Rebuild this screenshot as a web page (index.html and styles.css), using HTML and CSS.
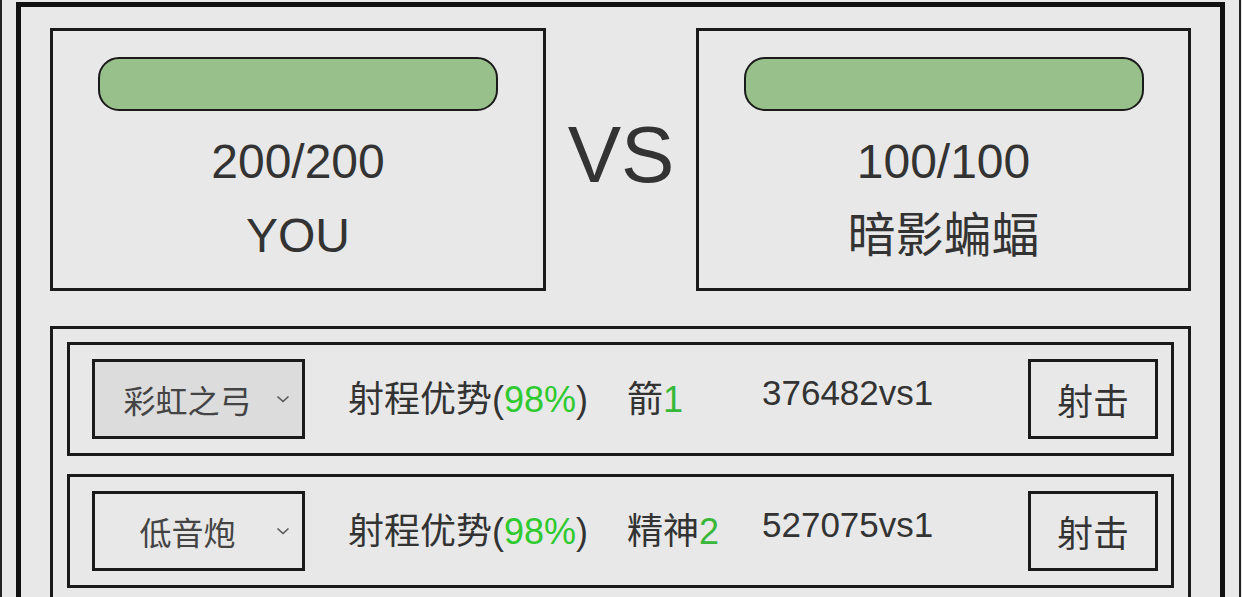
FILE: index.html
```html
<!DOCTYPE html>
<html lang="zh-CN">
<head>
    <meta charset="UTF-8">
    <meta name="viewport" content="width=device-width, initial-scale=1.0">
    <title>对战</title>
    <link rel="stylesheet" href="styles.css">
</head>
<body>

    <div class="frame">
        <div class="arena">

            <!-- Fighters -->
            <section class="fighters">
                <div class="card">
                    <div class="hp-bar"></div>
                    <div class="hp">200/200</div>
                    <div class="name">YOU</div>
                </div>
                <div class="vs">VS</div>
                <div class="card">
                    <div class="hp-bar"></div>
                    <div class="hp">100/100</div>
                    <div class="name">暗影蝙蝠</div>
                </div>
            </section>

            <!-- Weapons -->
            <section class="weapons">
                <div class="row">
                    <div class="select active">
                        <span class="select-text">彩虹之弓</span>
                        <svg class="chevron" width="14" height="8" viewBox="0 0 14 8"><path d="M1.5 1.5 L7 6.5 L12.5 1.5" fill="none" stroke="#555" stroke-width="1.6"/></svg>
                    </div>
                    <div class="stat">射程优势(<span class="good">98%</span>)</div>
                    <div class="ammo">箭<span class="count">1</span></div>
                    <div class="odds">376482vs1</div>
                    <button class="shoot">射击</button>
                </div>
                <div class="row">
                    <div class="select">
                        <span class="select-text">低音炮</span>
                        <svg class="chevron" width="14" height="8" viewBox="0 0 14 8"><path d="M1.5 1.5 L7 6.5 L12.5 1.5" fill="none" stroke="#555" stroke-width="1.6"/></svg>
                    </div>
                    <div class="stat">射程优势(<span class="good">98%</span>)</div>
                    <div class="ammo">精神<span class="count">2</span></div>
                    <div class="odds">527075vs1</div>
                    <button class="shoot">射击</button>
                </div>
            </section>

        </div>
    </div>

</body>
</html>
```

FILE: styles.css
```css
* {
    box-sizing: border-box;
}
body {
    margin: 0;
    background-color: #e8e8e8;
    color: #333;
    font-family: "Liberation Sans", "Noto Sans CJK SC", sans-serif;
    overflow: hidden;
}
.frame {
    width: 1241px;
    height: 700px;
    border: 2px solid #222;
    border-top: none;
    padding: 2px 14px 0;
}
.arena {
    border: 5px solid #111;
    padding: 21px 29px 0;
    height: 700px;
}
.fighters {
    display: grid;
    grid-template-columns: 496px 1fr 495px;
}
.card {
    height: 263px;
    border: 3px solid #1a1a1a;
    text-align: center;
    padding-top: 26px;
}
.hp-bar {
    width: 400px;
    height: 54px;
    margin: 0 auto 14px;
    background: #98c08a;
    border: 2px solid #1a1a1a;
    border-radius: 21px;
}
.hp, .name {
    font-size: 48px;
    line-height: 74px;
}
.vs {
    align-self: center;
    text-align: center;
    font-size: 80px;
    line-height: 1;
    padding-bottom: 10px;
}
.weapons {
    margin-top: 35px;
    border: 3px solid #1a1a1a;
    padding: 13px 14px;
    display: flex;
    flex-direction: column;
    gap: 18px;
}
.row {
    height: 114px;
    border: 3px solid #1a1a1a;
    padding: 0 13px 0 22px;
    display: grid;
    grid-template-columns: 213px 322px 135px 1fr 130px;
    align-items: center;
}
.select {
    height: 80px;
    border: 3px solid #1a1a1a;
    display: flex;
    align-items: center;
    padding: 0 12px 0 4px;
    font-size: 32px;
    color: #444;
}
.select.active {
    background: #dcdcdc;
}
.select-text {
    flex: 1;
    text-align: center;
}
.stat, .ammo {
    font-size: 36px;
    margin-bottom: 6px;
}
.stat {
    padding-left: 43px;
}
.good {
    color: #2fca2f;
}
.count {
    color: #38b838;
}
.odds {
    font-size: 35px;
    margin-bottom: 12px;
}
.shoot {
    height: 80px;
    border: 3px solid #1a1a1a;
    background: transparent;
    color: #333;
    font-family: "Liberation Sans", "Noto Sans CJK SC", sans-serif;
    font-size: 36px;
    padding: 0;
}
```
